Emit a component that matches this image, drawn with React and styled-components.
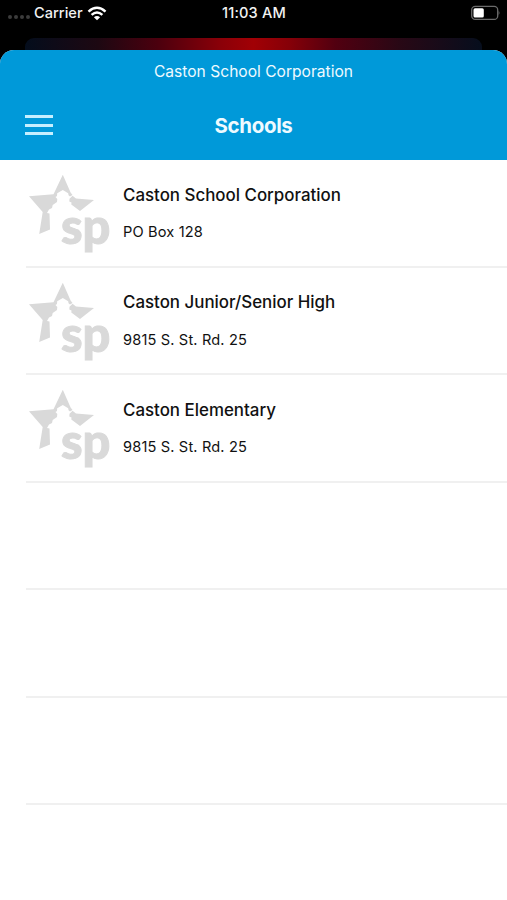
import React from 'react';
import styled, { createGlobalStyle } from 'styled-components';

const GlobalStyle = createGlobalStyle`
    * {
        box-sizing: border-box;
    }

    body {
        margin: 0;
        background: #fff;
        font-family: Inter, "Liberation Sans", sans-serif;
    }
`;

const ScreenSC = styled.div`
    height: 900px;
    overflow: hidden;
    display: flex;
    flex-direction: column;
    background: #000;
`;

const StatusBarSC = styled.div`
    flex: none;
    height: 38px;
    padding: 5px 7px 0 8px;
    display: grid;
    grid-template-columns: 1fr auto 1fr;
    align-items: start;
    color: #f2f2f2;
    line-height: 16px;
`;

const CarrierSC = styled.div`
    display: flex;
    align-items: center;
    gap: 4px;
`;

const SignalSC = styled.div`
    display: flex;
    gap: 2px;
    padding-top: 7px;
`;

const DotSC = styled.i`
    width: 4px;
    height: 4px;
    border-radius: 50%;
    background: #3c3c3c;
`;

const LabelSC = styled.span`
    white-space: nowrap;
    font-size: ${({ $size }) => $size}px;
    font-weight: ${({ $weight }) => $weight || 400};
    letter-spacing: ${({ $spacing }) => $spacing || 0}px;
`;

const BatterySC = styled.svg`
    justify-self: end;
`;

// The previous screen, peeking out behind the sheet
const BackCardSC = styled.div`
    flex: none;
    height: 12px;
    margin: 0 25px;
    border-radius: 9px 9px 0 0;
    background: linear-gradient(90deg, #040d1c 0%, #1d0812 16%, #4b000e 29%, #8b0008 43%, #a10005 50%, #850008 58%, #510010 68%, #280815 82%, #060e1d 100%);
`;

const SheetSC = styled.div`
    flex: 1;
    display: flex;
    flex-direction: column;
    overflow: hidden;
    border-radius: 14px 14px 0 0;
    background: #fff;
`;

const HeaderSC = styled.header`
    flex: none;
    height: 110px;
    background: #0099d9;
    color: #eefaff;
    text-align: center;
`;

const CorporationSC = styled.div`
    height: 42px;
    line-height: 43px;
`;

const NavBarSC = styled.div`
    height: 66px;
    padding: 0 25px;
    display: grid;
    grid-template-columns: 28px 1fr 28px;
    align-items: center;
`;

const MenuButtonSC = styled.button`
    width: 28px;
    height: 20px;
    padding: 0;
    border: 0;
    background: none;
    display: flex;
    flex-direction: column;
    justify-content: space-between;
`;

const MenuLineSC = styled.span`
    width: 28px;
    height: 3px;
    background: #c5efff;
`;

const ListSC = styled.div`
    padding-left: 26px;
`;

const RowSC = styled.div`
    height: 107.5px;
    border-bottom: 2px solid #f0f0f0;
    display: flex;
`;

const InfosSC = styled.div`
    padding: 24.5px 0 0 11px;
    display: flex;
    flex-direction: column;
    gap: 17.5px;
    line-height: 20px;
    color: #111;
`;

const LogoSC = styled.svg`
    flex: none;
    margin-top: 11px;
`;

const Wifi = () => (
    <svg width="20" height="15" viewBox="0 0 20 15" fill="none" stroke="#fff" strokeWidth="2.5">
        <path d="M1.5 5.6 Q10 -2 18.5 5.6" />
        <path d="M4.6 8.9 Q10 4 15.4 8.9" />
        <path d="M10 14.2 L6.9 11.3 Q10 8.5 13.1 11.3 Z" fill="#fff" stroke="none" />
    </svg>
);

const Battery = () => (
    <BatterySC width="30" height="16" viewBox="0 0 30 16">
        <rect x="1.7" y="1.4" width="26" height="13" rx="3.5" fill="none" stroke="#6b6b6b" strokeWidth="1.3" />
        <rect x="3.5" y="3.2" width="10.3" height="9.4" rx="1.5" fill="#fff" />
        <path d="M28.6 5.7 Q30.4 7.9 28.6 10.1 Z" fill="#6b6b6b" />
    </BatterySC>
);

const Logo = () => (
    <LogoSC width="86" height="88" viewBox="0 0 86 88" fill="#d9d9d9">
        <path d="M36.8 3.8 L44.6 21.5 L46.5 24 L44 25.5 L42.5 24.2 L42.2 22.3 L36.8 19 L31.2 22.3 L31 25 L29.5 26 L31.3 28 L31 31 L26.7 34 L26 37 L23 38.5 L21 42 L23.5 42.5 L24 58.5 L13.2 63 L16.7 41 L3 25.2 L27.5 23.2 Z" />
        <path d="M46.5 24.8 L50 27.5 L68 29 L54 40 L45.3 33.5 L45.5 31.5 L43.3 30.5 L43.5 27.8 Z" />
        <text
            x="35"
            y="73"
            fontFamily='Lato, "Open Sans", sans-serif'
            fontSize="49"
            fontWeight="900"
            stroke="#d9d9d9"
            strokeWidth="1"
            textLength="49.5"
            lengthAdjust="spacingAndGlyphs"
        >
            sp
        </text>
    </LogoSC>
);

const schools = [
    { name: 'Caston School Corporation', address: 'PO Box 128' },
    { name: 'Caston Junior/Senior High', address: '9815 S. St. Rd. 25' },
    { name: 'Caston Elementary', address: '9815 S. St. Rd. 25' },
];

const App = () => {
    return (
        <ScreenSC>
            <GlobalStyle />

            <StatusBarSC>
                <CarrierSC>
                    <SignalSC>
                        <DotSC />
                        <DotSC />
                        <DotSC />
                        <DotSC />
                    </SignalSC>
                    <LabelSC $size={14.6} $weight={500}>Carrier</LabelSC>
                    <Wifi />
                </CarrierSC>
                <LabelSC $size={14.6} $weight={500} $spacing={0.15}>11:03 AM</LabelSC>
                <Battery />
            </StatusBarSC>

            <BackCardSC />

            <SheetSC>
                <HeaderSC>
                    <CorporationSC>
                        <LabelSC $size={15.6}>Caston School Corporation</LabelSC>
                    </CorporationSC>
                    <NavBarSC>
                        <MenuButtonSC aria-label="Menu">
                            <MenuLineSC />
                            <MenuLineSC />
                            <MenuLineSC />
                        </MenuButtonSC>
                        <LabelSC $size={20.5} $weight={700} $spacing={-0.35}>Schools</LabelSC>
                    </NavBarSC>
                </HeaderSC>

                <ListSC>
                    {schools.map(({ name, address }) => (
                        <RowSC key={name}>
                            <Logo />
                            <InfosSC>
                                <LabelSC $size={16.9} $weight={500}>{name}</LabelSC>
                                <LabelSC $size={14.6} $spacing={0.15}>{address}</LabelSC>
                            </InfosSC>
                        </RowSC>
                    ))}
                    <RowSC />
                    <RowSC />
                    <RowSC />
                </ListSC>
            </SheetSC>
        </ScreenSC>
    );
};

export default App;
